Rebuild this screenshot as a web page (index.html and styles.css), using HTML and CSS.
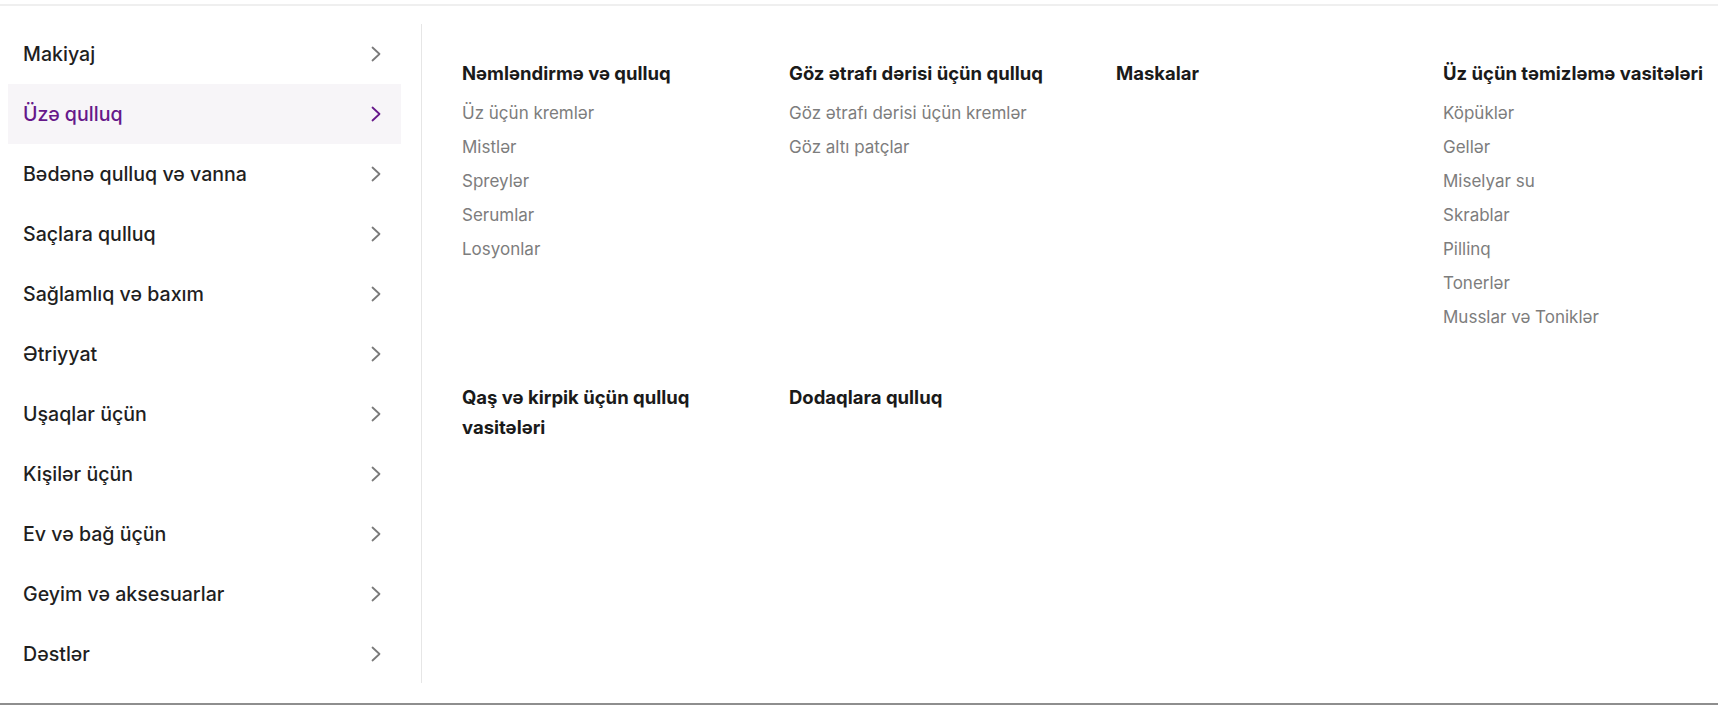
FILE: index.html
```html
<!DOCTYPE html>
<html lang="az">
<head>
<meta charset="utf-8">
<title>Kataloq</title>
<link rel="stylesheet" href="styles.css">
</head>
<body>
<div class="page">
  <div class="topline"></div>
  <div class="menu">
    <nav class="sidebar">
      <a class="cat">Makiyaj<span class="chev"><svg viewBox="0 0 10 16" width="10" height="16"><path d="M1.5 1.5 L8.5 8 L1.5 14.5" fill="none" stroke="currentColor" stroke-width="1.8" stroke-linecap="round" stroke-linejoin="round"/></svg></span></a>
      <a class="cat active">Üzə qulluq<span class="chev"><svg viewBox="0 0 10 16" width="10" height="16"><path d="M1.5 1.5 L8.5 8 L1.5 14.5" fill="none" stroke="currentColor" stroke-width="1.8" stroke-linecap="round" stroke-linejoin="round"/></svg></span></a>
      <a class="cat">Bədənə qulluq və vanna<span class="chev"><svg viewBox="0 0 10 16" width="10" height="16"><path d="M1.5 1.5 L8.5 8 L1.5 14.5" fill="none" stroke="currentColor" stroke-width="1.8" stroke-linecap="round" stroke-linejoin="round"/></svg></span></a>
      <a class="cat">Saçlara qulluq<span class="chev"><svg viewBox="0 0 10 16" width="10" height="16"><path d="M1.5 1.5 L8.5 8 L1.5 14.5" fill="none" stroke="currentColor" stroke-width="1.8" stroke-linecap="round" stroke-linejoin="round"/></svg></span></a>
      <a class="cat">Sağlamlıq və baxım<span class="chev"><svg viewBox="0 0 10 16" width="10" height="16"><path d="M1.5 1.5 L8.5 8 L1.5 14.5" fill="none" stroke="currentColor" stroke-width="1.8" stroke-linecap="round" stroke-linejoin="round"/></svg></span></a>
      <a class="cat">Ətriyyat<span class="chev"><svg viewBox="0 0 10 16" width="10" height="16"><path d="M1.5 1.5 L8.5 8 L1.5 14.5" fill="none" stroke="currentColor" stroke-width="1.8" stroke-linecap="round" stroke-linejoin="round"/></svg></span></a>
      <a class="cat">Uşaqlar üçün<span class="chev"><svg viewBox="0 0 10 16" width="10" height="16"><path d="M1.5 1.5 L8.5 8 L1.5 14.5" fill="none" stroke="currentColor" stroke-width="1.8" stroke-linecap="round" stroke-linejoin="round"/></svg></span></a>
      <a class="cat">Kişilər üçün<span class="chev"><svg viewBox="0 0 10 16" width="10" height="16"><path d="M1.5 1.5 L8.5 8 L1.5 14.5" fill="none" stroke="currentColor" stroke-width="1.8" stroke-linecap="round" stroke-linejoin="round"/></svg></span></a>
      <a class="cat">Ev və bağ üçün<span class="chev"><svg viewBox="0 0 10 16" width="10" height="16"><path d="M1.5 1.5 L8.5 8 L1.5 14.5" fill="none" stroke="currentColor" stroke-width="1.8" stroke-linecap="round" stroke-linejoin="round"/></svg></span></a>
      <a class="cat">Geyim və aksesuarlar<span class="chev"><svg viewBox="0 0 10 16" width="10" height="16"><path d="M1.5 1.5 L8.5 8 L1.5 14.5" fill="none" stroke="currentColor" stroke-width="1.8" stroke-linecap="round" stroke-linejoin="round"/></svg></span></a>
      <a class="cat">Dəstlər<span class="chev"><svg viewBox="0 0 10 16" width="10" height="16"><path d="M1.5 1.5 L8.5 8 L1.5 14.5" fill="none" stroke="currentColor" stroke-width="1.8" stroke-linecap="round" stroke-linejoin="round"/></svg></span></a>
    </nav>
    <div class="divider"></div>
    <section class="content">
      <div class="group">
        <h3>Nəmləndirmə və qulluq</h3>
        <ul>
          <li>Üz üçün kremlər</li>
          <li>Mistlər</li>
          <li>Spreylər</li>
          <li>Serumlar</li>
          <li>Losyonlar</li>
        </ul>
      </div>
      <div class="group">
        <h3>Göz ətrafı dərisi üçün qulluq</h3>
        <ul>
          <li>Göz ətrafı dərisi üçün kremlər</li>
          <li>Göz altı patçlar</li>
        </ul>
      </div>
      <div class="group">
        <h3>Maskalar</h3>
      </div>
      <div class="group">
        <h3>Üz üçün təmizləmə vasitələri</h3>
        <ul>
          <li>Köpüklər</li>
          <li>Gellər</li>
          <li>Miselyar su</li>
          <li>Skrablar</li>
          <li>Pillinq</li>
          <li>Tonerlər</li>
          <li>Musslar və Toniklər</li>
        </ul>
      </div>
      <div class="group">
        <h3>Qaş və kirpik üçün qulluq vasitələri</h3>
      </div>
      <div class="group">
        <h3>Dodaqlara qulluq</h3>
      </div>
    </section>
  </div>
  <div class="bottomline"></div>
</div>
</body>
</html>
```
FILE: styles.css
```css
* { box-sizing: border-box; }
html, body { margin: 0; padding: 0; background: #fff; }
body {
  font-family: "Inter", "Noto Sans", sans-serif;
  color: #1c1c1c;
}
.page {
  height: 705px;
  overflow: hidden;
  display: flex;
  flex-direction: column;
}
.topline {
  height: 6px;
  border-bottom: 2px solid #efefef;
  flex-shrink: 0;
}
.menu {
  display: flex;
  padding-top: 18px;
  height: 697px;
  flex-shrink: 0;
}
.sidebar {
  width: 401px;
  flex-shrink: 0;
  padding-left: 8px;
  display: flex;
  flex-direction: column;
}
.cat {
  height: 60px;
  display: flex;
  align-items: center;
  justify-content: space-between;
  padding: 0 20px 0 15px;
  font-size: 19.6px;
  font-weight: 500;
  color: #1f1f1f;
  cursor: pointer;
}
.cat .chev { color: #7a7a7a; display: flex; }
.cat.active { background: #f7f5f8; color: #66188a; }
.cat.active .chev { color: #66188a; }
.divider {
  width: 1px;
  flex-shrink: 0;
  background: #e6e6e6;
  margin-left: 20px;
  height: 659px;
}
.content {
  flex: 1;
  min-width: 0;
  overflow: hidden;
  padding: 34px 0 0 40px;
  display: grid;
  grid-template-columns: repeat(4, 327px);
  grid-auto-rows: min-content;
  row-gap: 48px;
  align-content: start;
}
.group { padding-right: 24px; }
.group h3 {
  margin: 0 0 8px;
  font-size: 18.5px;
  line-height: 30px;
  font-weight: 700;
  color: #1a1a1a;
}
.group ul { list-style: none; margin: 0; padding: 0; }
.group li {
  font-size: 17px;
  line-height: 34px;
  color: #7d7d7d;
}
.bottomline {
  height: 2px;
  background: #8e8e8e;
  margin-top: auto;
}
```
